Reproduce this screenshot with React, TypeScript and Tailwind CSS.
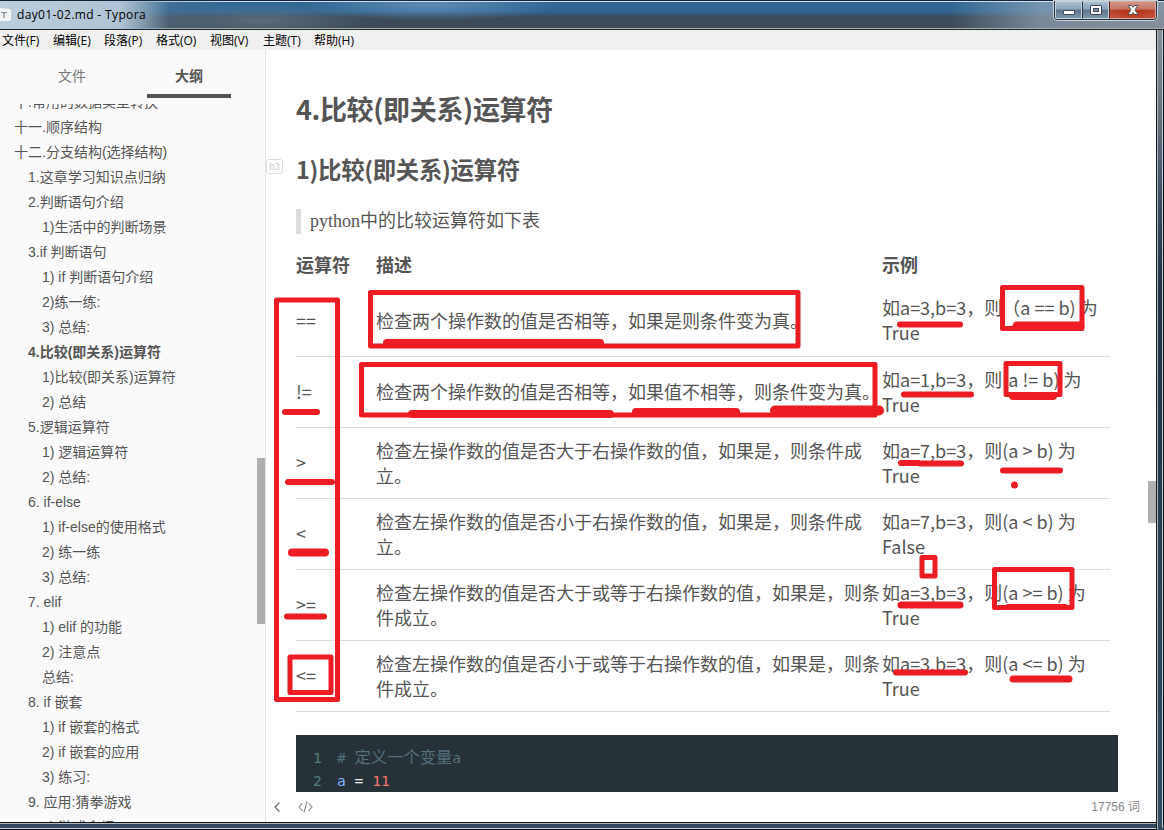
import React from "react";

type OutlineItem = { text: string; level: 0 | 1 | 2; active?: boolean };

const outline: OutlineItem[] = [
  { text: "十.常用的数据类型转换", level: 0 },
  { text: "十一.顺序结构", level: 0 },
  { text: "十二.分支结构(选择结构)", level: 0 },
  { text: "1.这章学习知识点归纳", level: 1 },
  { text: "2.判断语句介绍", level: 1 },
  { text: "1)生活中的判断场景", level: 2 },
  { text: "3.if 判断语句", level: 1 },
  { text: "1) if 判断语句介绍", level: 2 },
  { text: "2)练一练:", level: 2 },
  { text: "3) 总结:", level: 2 },
  { text: "4.比较(即关系)运算符", level: 1, active: true },
  { text: "1)比较(即关系)运算符", level: 2 },
  { text: "2) 总结", level: 2 },
  { text: "5.逻辑运算符", level: 1 },
  { text: "1) 逻辑运算符", level: 2 },
  { text: "2) 总结:", level: 2 },
  { text: "6. if-else", level: 1 },
  { text: "1) if-else的使用格式", level: 2 },
  { text: "2) 练一练", level: 2 },
  { text: "3) 总结:", level: 2 },
  { text: "7. elif", level: 1 },
  { text: "1) elif 的功能", level: 2 },
  { text: "2) 注意点", level: 2 },
  { text: "总结:", level: 2 },
  { text: "8. if 嵌套", level: 1 },
  { text: "1) if 嵌套的格式", level: 2 },
  { text: "2) if 嵌套的应用", level: 2 },
  { text: "3) 练习:", level: 2 },
  { text: "9. 应用:猜拳游戏", level: 1 },
  { text: "1) 游戏介绍", level: 2 },
];

const indent = ["pl-[14px]", "pl-[28px]", "pl-[42px]"];

const rows = [
  { op: "==", desc: ["检查两个操作数的值是否相等，如果是则条件变为真。"], ex: ["如a=3,b=3，则（a == b) 为", "True"] },
  { op: "!=", desc: ["检查两个操作数的值是否相等，如果值不相等，则条件变为真。"], ex: ["如a=1,b=3，则(a != b) 为", "True"] },
  { op: ">", desc: ["检查左操作数的值是否大于右操作数的值，如果是，则条件成", "立。"], ex: ["如a=7,b=3，则(a > b) 为", "True"] },
  { op: "<", desc: ["检查左操作数的值是否小于右操作数的值，如果是，则条件成", "立。"], ex: ["如a=7,b=3，则(a < b) 为", "False"] },
  { op: ">=", desc: ["检查左操作数的值是否大于或等于右操作数的值，如果是，则条", "件成立。"], ex: ["如a=3,b=3，则(a >= b) 为", "True"] },
  { op: "<=", desc: ["检查左操作数的值是否小于或等于右操作数的值，如果是，则条", "件成立。"], ex: ["如a=3,b=3，则(a <= b) 为", "True"] },
];

const menus = [
  { label: "文件(F)", width: "w-[51px]" },
  { label: "编辑(E)", width: "w-[51px]" },
  { label: "段落(P)", width: "w-[52px]" },
  { label: "格式(O)", width: "w-[54px]" },
  { label: "视图(V)", width: "w-[53px]" },
  { label: "主题(T)", width: "w-[51px]" },
  { label: "帮助(H)", width: "w-[52px]" },
];

// x, y, width, height of the stroke centre line
const boxes = [
  [276.5, 300, 61, 399.5],
  [370.5, 292.5, 427.5, 53.5],
  [361.5, 364.5, 513.5, 50.5],
  [1002.5, 287.5, 79.5, 41],
  [1006, 363.5, 54, 31],
  [922, 557.5, 13, 18.5],
  [994.5, 569.5, 77.5, 38],
  [290, 657, 41, 35.5],
];

// x1, x2, y, thickness
const strokes = [
  [387, 600, 343, 8],
  [412, 610, 414, 8],
  [636, 736, 412, 8],
  [775, 879, 410.5, 10],
  [285, 317, 412, 6],
  [288, 332, 482, 6],
  [292, 325, 552.5, 8],
  [287, 324, 616.5, 6],
  [900, 960, 324.5, 6],
  [1017, 1080, 326, 9],
  [904, 971, 394.5, 6],
  [1013, 1053, 396, 8],
  [901, 918, 463, 6],
  [920, 961, 463.5, 6],
  [1003, 1060, 470.5, 6],
  [901, 960, 605, 7],
  [1008, 1065, 607, 6],
  [896, 965, 672.5, 6],
  [1013, 1069, 679, 7],
];

function TitleBar() {
  return (
    <div className="flex h-[30px] shrink-0 items-start border-y border-t-[#10233f] border-b-[#1e2529] bg-[linear-gradient(to_bottom,#d3dfe9_0,#d3dfe9_1px,transparent_1px,transparent_27px,#a4b0b1_27px),linear-gradient(to_right,transparent_950px,#a3b3c399_1040px,#96a0abcc_1164px),radial-gradient(ellipse_130px_16px_at_430px_4px,#79a5cc99_0,transparent_100%),radial-gradient(ellipse_110px_18px_at_260px_20px,#8b9caa66_0,transparent_100%),linear-gradient(to_bottom,#316794_0,#2f6592_10px,#3b4c5b_16px,#3b4955_28px)]">
      <div className="flex h-[28px] min-w-0 flex-1 items-center bg-[linear-gradient(to_right,#bccedd_0,#afc3d4_120px,#8fa9bdcc_145px,#6685a044_170px,transparent_230px)]">
        <svg width="12" height="16" viewBox="0 0 12 16" className="mr-[5px]">
          <path d="M0 1L9 2L11 3V13L9 14H0Z" fill="#f4f5f6" />
          <path d="M1 5.5H7M4 5.5V11" stroke="#888" strokeWidth="1.2" />
        </svg>
        <span className="whitespace-pre font-['Open_Sans',sans-serif] text-[12px] leading-[20px] tracking-[0.36px] text-black">
          day01-02.md - Typora
        </span>
      </div>
      <div className="mr-[7px] flex h-[19px] w-[103px] overflow-hidden rounded-b-[4px] border border-t-0 border-[#263142] bg-[#e0e8ee] shadow-[0_0_0_1px_#c6d1da]">
        <div className="flex w-[27px] items-center justify-center border border-[#c6d3dd] bg-[linear-gradient(#a9bfd0_0,#8ba3b8_45%,#5d758b_50%,#7e96a9_100%)]">
          <svg width="12" height="14" viewBox="0 0 12 14">
            <rect x="0.5" y="7.5" width="11" height="4" rx="0.5" fill="#fff" stroke="#454b5b" />
          </svg>
        </div>
        <div className="flex w-[27px] items-center justify-center border border-l-[#263142] border-[#c6d3dd] bg-[linear-gradient(#a9bfd0_0,#8ba3b8_45%,#5d758b_50%,#7e96a9_100%)]">
          <svg width="12" height="12" viewBox="0 0 12 12">
            <rect x="0.5" y="1.5" width="11" height="9" rx="0.5" fill="#fff" stroke="#454b5b" />
            <rect x="3.5" y="4.5" width="5" height="3" fill="#7a92a8" stroke="#454b5b" />
          </svg>
        </div>
        <div className="flex flex-1 items-center justify-center border border-l-[#5b1f18] border-[#dba79c] bg-[radial-gradient(ellipse_at_50%_70%,transparent_30%,#c9887a66_100%),linear-gradient(#d59a8d_0,#c4705f_45%,#b33318_52%,#c4492f_100%)]">
          <svg width="12" height="12" viewBox="0 0 12 12">
            <path d="M1 1.5H4.5L6 3.2L7.5 1.5H11L8 5.8L11 10.5H7.5L6 8.6L4.5 10.5H1L4 5.8Z" fill="#fff" stroke="#4e4b57" />
          </svg>
        </div>
      </div>
    </div>
  );
}

function Sidebar() {
  return (
    <aside className="relative flex w-[266px] shrink-0 flex-col border-r border-[#e4e4e4] bg-[#fafafa] font-['Liberation_Sans','Noto_Sans_CJK_SC',sans-serif] text-[14px] text-[#555]">
      <div className="flex h-[54px] shrink-0 items-start pl-[30px]">
        <div className="h-[48px] w-[84px] pt-[1px] text-center leading-[50px] text-[#777]">文件</div>
        <div className="ml-[33px] h-[48px] w-[84px] border-b-4 border-[#555] pt-[1px] text-center font-bold leading-[50px]">大纲</div>
      </div>
      <div className="min-h-0 flex-1 overflow-hidden">
        <ul className="mt-[-14px]">
          {outline.map((item, i) => (
            <li
              key={i}
              className={`h-[25px] whitespace-pre leading-[25px] ${indent[item.level]} ${item.active ? "font-bold" : ""}`}
            >
              {item.text}
            </li>
          ))}
        </ul>
      </div>
      <div className="absolute right-0 top-[408px] h-[166px] w-[8px] bg-[#aeaeae]" />
    </aside>
  );
}

function Annotations() {
  return (
    <svg className="pointer-events-none absolute inset-0" width="1164" height="830" viewBox="0 0 1164 830">
      <g fill="none" stroke="#ed1c24" strokeLinejoin="round" strokeLinecap="round">
        {boxes.map(([x, y, w, h], i) => (
          <rect key={i} x={x} y={y} width={w} height={h} strokeWidth="5" />
        ))}
        {strokes.map(([x1, x2, y, t], i) => (
          <path key={i} d={`M${x1} ${y}H${x2}`} strokeWidth={t} />
        ))}
      </g>
      <circle cx="1014.5" cy="485" r="3.5" fill="#ed1c24" />
    </svg>
  );
}

function Document() {
  return (
    <main className="flex min-w-0 flex-1 flex-col bg-white font-['Noto_Sans_CJK_SC',sans-serif] text-[18px] text-[#555]">
      <div className="h-[742px] shrink-0 overflow-hidden pl-[30px]">
        <h2 className="mt-[39px] h-[40px] whitespace-pre text-[27px] font-bold leading-[40px] tracking-[-0.36px]">4.比较(即关系)运算符</h2>
        <div className="relative mt-[22px] h-[36px]">
          <span className="absolute left-[-30px] top-[8px] flex h-[15px] w-[17px] items-center justify-center rounded-[3px] border border-[#ddd] text-[9px] font-bold leading-none text-[#d8d8d8]">
            h3
          </span>
          <h3 className="whitespace-pre text-[23.4px] font-bold leading-[36px] tracking-[-0.3px]">1)比较(即关系)运算符</h3>
        </div>
        <blockquote className="mt-[22px] h-[25px] border-l-[5px] border-[#ddd] pl-[9px] font-['Liberation_Serif','Noto_Sans_CJK_SC',serif] leading-[24px]">
          python中的比较运算符如下表
        </blockquote>
        <table className="mt-[9px] w-[814px] table-fixed border-collapse text-left">
          <colgroup>
            <col className="w-[80px]" />
            <col className="w-[506px]" />
            <col className="w-[228px]" />
          </colgroup>
          <thead>
            <tr className="h-[42px]">
              <th className="p-0 leading-[25px]">运算符</th>
              <th className="p-0 leading-[25px]">描述</th>
              <th className="p-0 leading-[25px]">示例</th>
            </tr>
          </thead>
          <tbody>
            {rows.map((row) => (
              <tr key={row.op} className="h-[71px] border-b border-[#ddd] leading-[25px]">
                <td className="p-0">{row.op}</td>
                <td className="whitespace-nowrap p-0">
                  {row.desc.map((line) => (
                    <div key={line}>{line}</div>
                  ))}
                </td>
                <td className="whitespace-nowrap p-0">
                  {row.ex.map((line) => (
                    <div key={line}>{line}</div>
                  ))}
                </td>
              </tr>
            ))}
          </tbody>
        </table>
        <pre className="mt-[23px] h-[57px] w-[822px] bg-[#263238] pt-[11px] font-['DejaVu_Sans_Mono','Noto_Sans_CJK_SC',monospace] text-[14.6px] leading-[23px] text-[#eceff1]">
          <div className="flex h-[23px]">
            <span className="w-[41px] pl-[17px] text-[#537f7e]">1</span>
            <span className="text-[#546e7a]"># <span className="text-[16.3px]">定义一个变量</span>a</span>
          </div>
          <div className="flex h-[23px]">
            <span className="w-[41px] pl-[17px] text-[#537f7e]">2</span>
            <span><span className="text-[#82b1ff]">a</span> = <span className="text-[#f77669]">11</span></span>
          </div>
        </pre>
      </div>
      <footer className="flex flex-1 items-center pl-[8px] pr-[8px] font-['Liberation_Sans','Noto_Sans_CJK_SC',sans-serif] text-[12px] text-[#888]">
        <svg width="7" height="10" viewBox="0 0 7 10" fill="none" stroke="#777" strokeWidth="1.4">
          <path d="M5.5 0.5L1 5L5.5 9.5" />
        </svg>
        <svg className="ml-[17px]" width="15" height="12" viewBox="0 0 15 12" fill="none" stroke="#888" strokeWidth="1.1">
          <path d="M4.5 2L1 6L4.5 10M10.5 2L14 6L10.5 10M9 0.5L6 11.5" />
        </svg>
        <span className="ml-auto">17756 词</span>
      </footer>
    </main>
  );
}

export default function App() {
  return (
    <div className="relative flex h-[830px] w-[1164px] flex-col overflow-hidden bg-[#35495d]">
      <TitleBar />
      <div className="flex min-h-0 flex-1">
        <div className="flex min-w-0 flex-1 flex-col">
          <nav className="flex h-[20px] shrink-0 bg-[#f0f0f0] pl-[2px] font-['Open_Sans','Noto_Sans_CJK_SC',sans-serif] text-[12px] leading-[21px] text-black">
            {menus.map((m) => (
              <span key={m.label} className={`whitespace-nowrap ${m.width}`}>{m.label}</span>
            ))}
          </nav>
          <div className="flex min-h-0 flex-1">
            <Sidebar />
            <Document />
            <div className="w-[8px] shrink-0 bg-white pt-[431px]">
              <div className="h-[42px] bg-[#b1b1b1]" />
            </div>
          </div>
          <div className="h-[8px] shrink-0 border-t border-[#111] bg-[linear-gradient(#aab5bd_0,#aab5bd_1px,#334759_1px,#3c4e60_5px,#c4d0d8_5px,#c4d0d8_6px,#05090d_6px)]" />
        </div>
        <div className="mb-[1px] w-[8px] shrink-0 rounded-br-[5px] border-l border-[#151b20] bg-[linear-gradient(to_right,#aab8bd_0,#aab8bd_1px,transparent_1px,transparent_5px,#c5d0d8_5px,#c5d0d8_6px,#080e14_6px),linear-gradient(#85909c_0,#68737f_80px,#34475b_190px,#203244_260px,#334d64_100%)]" />
      </div>
      <Annotations />
    </div>
  );
}
